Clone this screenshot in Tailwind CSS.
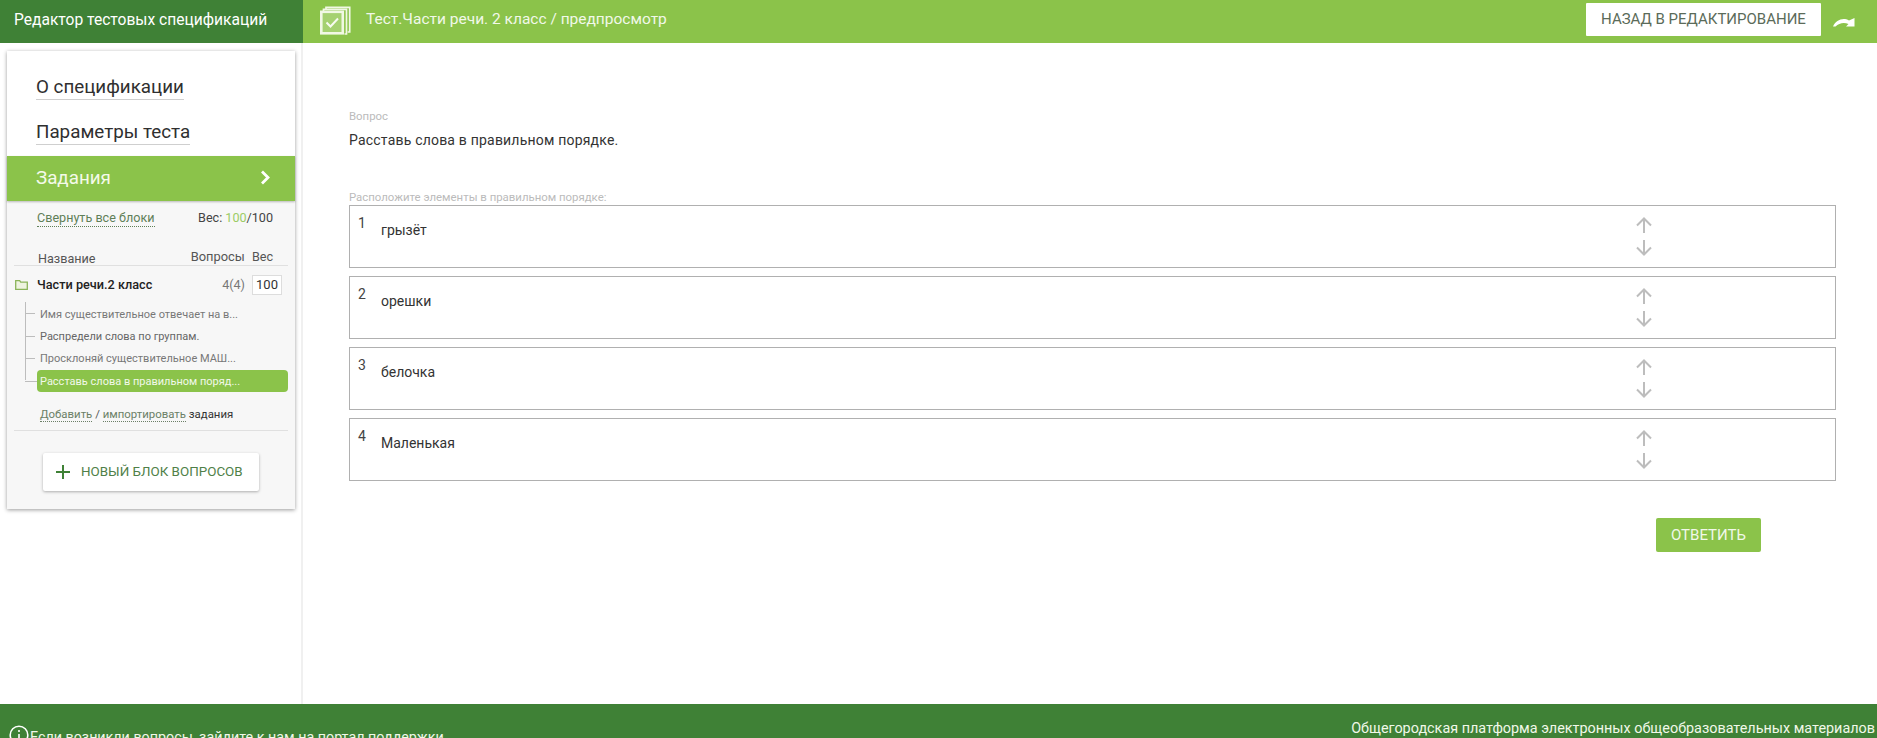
<!DOCTYPE html>
<html lang="ru">
<head>
<meta charset="UTF-8">
<title>Редактор тестовых спецификаций</title>
<script src="https://cdn.jsdelivr.net/npm/@tailwindcss/browser@4"></script>
</head>
<body class="bg-white font-['Roboto',sans-serif] text-[#333]">
<div class="flex flex-col h-[738px] overflow-hidden">
  <!-- header -->
  <header class="flex h-[43px] shrink-0 bg-[#8bc34a] text-white">
    <div class="w-[303px] bg-[#3f8136] pl-[14px] text-[15.600px] leading-[40px]">Редактор тестовых спецификаций</div>
    <div class="flex-1 flex items-center pl-[17px]">
      <svg width="31" height="31" viewBox="0 0 31 31" fill="none" stroke="#f1f8e4" class="mr-[15px] mt-[-1px]">
        <path d="M6 3V1.300h23.700V26h-2" stroke-width="1.700"/>
        <path d="M3.500 5V3.300h23V28h-2" stroke-width="1.700"/>
        <rect x="1.300" y="5.800" width="21.500" height="21.500" fill="#a5d170" stroke-width="2.600"/>
        <path d="M6.500 16.500l4 4 7.500-8" stroke="#f7fbf0" stroke-width="2"/>
      </svg>
      <div class="text-[15.500px] text-[#f1f8e9] mt-[-3px]">Тест.Части речи. 2 класс / предпросмотр</div>
      <button class="ml-auto h-[33px] w-[235px] bg-white text-[15px] text-[#5b6b59] rounded-[1px] mt-[-4px]">НАЗАД В РЕДАКТИРОВАНИЕ</button>
      <svg width="22" height="10" viewBox="0 0 22 10" class="ml-[12px] mr-[22px]">
        <path d="M0 9.500C3 3 10 0 16 3.500L21.500 1v8.500H13L15.500 7C11 5 6 6 2.500 9.500z" fill="#fff"/>
      </svg>
    </div>
  </header>

  <div class="flex flex-1 min-h-0">
    <!-- sidebar -->
    <aside class="w-[303px] shrink-0 border-r-2 border-[#f0f0f0] pt-[8px] pl-[7px]">
      <div class="w-[288px] bg-white shadow-[0_1px_4px_rgba(0,0,0,0.4)]">
        <div class="h-[105px] pt-[23px] pl-[29px] text-[18.800px] text-[#2f2f2f]">
          <div class="h-[26px] leading-[26px] w-fit border-b border-[#cfcfcf]">О спецификации</div>
          <div class="h-[26px] leading-[26px] w-fit border-b border-[#cfcfcf] mt-[19px]">Параметры теста</div>
        </div>
        <div class="h-[45px] bg-[#8bc34a] text-[#f4fae9] text-[18.800px] leading-[26px] pl-[29px] pr-[24px] pb-[2px] flex justify-between items-center shadow-[0_1px_2px_rgba(0,0,0,0.25)] relative">
          <span>Задания</span>
          <svg width="11" height="15" viewBox="0 0 11 15" fill="none" stroke="#fff" stroke-width="2.800"><path d="M2 1.500l6 6-6 6"/></svg>
        </div>
        <div class="bg-[#f7f7f7] h-[308px] pt-[8px] text-[12.600px]">
          <div class="flex justify-between pl-[30px] pr-[22px] leading-[18px]">
            <span class="text-[#5f7f58] border-b border-dotted border-[#5f7f58] leading-[15px] h-[17px] mt-[1px]">Свернуть все блоки</span>
            <span class="text-[#444]">Вес: <span class="text-[#9ccc65]">100</span>/100</span>
          </div>
          <div class="flex mx-[7px] pl-[24px] pr-[15px] mt-[23px] h-[16px] border-b border-[#e0e0e0] leading-[15px] text-[#555]">
            <span class="mt-[1px]">Название</span>
            <span class="ml-auto mt-[-1px] text-[12.900px]">Вопросы</span>
            <span class="ml-[7px] mt-[-1px]">Вес</span>
          </div>
          <div class="flex items-center mt-[9px] pl-[8px] pr-[13px] h-[20px]">
            <svg width="13" height="10" viewBox="0 0 13 10" fill="#eef3e0" stroke="#8bb45a" stroke-width="1.300"><path d="M.700 9.300V.700h4l1 1.500h6.600v7.100z"/></svg>
            <span class="ml-[9px] text-[#222] font-medium text-[12.700px]">Части речи.2 класс</span>
            <span class="ml-auto text-[#777]">4(4)</span>
            <span class="ml-[7px] w-[30px] h-[20px] border border-[#ddd] bg-white text-center leading-[18px] text-[#333] text-[13px]">100</span>
          </div>
          <div class="relative mt-[7px] text-[11px] pl-[33px]">
            <div class="absolute left-[18px] top-[0px] h-[78px] w-px bg-[#bdbdbd]"></div>
            <div class="h-[23px] leading-[25px] text-[#777] relative"><i class="absolute left-[-15px] top-[11px] w-[10px] h-px bg-[#bdbdbd]"></i>Имя существительное отвечает на в...</div>
            <div class="h-[22px] leading-[24px] text-[#666] relative"><i class="absolute left-[-15px] top-[11px] w-[10px] h-px bg-[#bdbdbd]"></i>Распредели слова по группам.</div>
            <div class="h-[23px] leading-[24px] text-[#777] relative"><i class="absolute left-[-15px] top-[11px] w-[10px] h-px bg-[#bdbdbd]"></i>Просклоняй существительное МАШ...</div>
            <div class="h-[22px] leading-[23px] text-[#f1f8e9] bg-[#8bc34a] rounded-[4px] ml-[-3px] pl-[3px] w-[251px] relative"><i class="absolute left-[-12px] top-[11px] w-[12px] h-px bg-[#bdbdbd]"></i>Расставь слова в правильном поряд...</div>
          </div>
          <div class="mx-[7px] mt-[14px] pl-[26px] h-[25px] border-b border-[#e0e0e0] text-[11.400px] leading-[16px] text-[#555]">
            <span class="text-[#6b7f66] border-b border-dotted border-[#6b7f66]">Добавить</span> / <span class="text-[#6b7f66] border-b border-dotted border-[#6b7f66]">импортировать</span> <span class="text-[#333]">задания</span>
          </div>
          <button class="flex items-center ml-[36px] mt-[22px] w-[216px] h-[38px] bg-white rounded-[2px] shadow-[0_1px_3px_rgba(0,0,0,0.3)] text-[#4f7f48] text-[13.400px] pl-[13px]">
            <svg width="14" height="14" viewBox="0 0 14 14" stroke="#3f8136" stroke-width="2" class="mr-[11px]"><path d="M7 0v14M0 7h14"/></svg>
            НОВЫЙ БЛОК ВОПРОСОВ
          </button>
        </div>
      </div>
    </aside>

    <!-- question -->
    <main class="flex-1 pl-[46px] pr-[41px] pt-[66px]">
      <div class="text-[11.400px] leading-[14px] text-[#bbb]">Вопрос</div>
      <div class="text-[14px] leading-[20px] mt-[7px] text-[#333] tracking-[0.2px]">Расставь слова в правильном порядке.</div>
      <div class="text-[11.400px] leading-[14px] text-[#bbb] mt-[40px]">Расположите элементы в правильном порядке:</div>
      <div class="flex flex-col gap-[8px] mt-[1px]">
        <div class="relative h-[63px] border border-[#b0b0b0] pl-[8px] flex">
          <span class="w-[23px] text-[14px] leading-[20px] mt-[7px] text-[#444]">1</span>
          <span class="text-[14px] leading-[20px] mt-[14px] text-[#333]">грызёт</span>
          <div class="ml-auto mr-[183px] mt-[11px] flex flex-col gap-[7px]">
            <svg width="16" height="16" viewBox="0 0 16 16" fill="none" stroke="#bdbdbd" stroke-width="2"><path d="M8 16V1.500M1 8.500l7-7 7 7"/></svg>
            <svg width="16" height="16" viewBox="0 0 16 16" fill="none" stroke="#bdbdbd" stroke-width="2"><path d="M8 0v14.500M1 7.500l7 7 7-7"/></svg>
          </div>
        </div>
        <div class="relative h-[63px] border border-[#b0b0b0] pl-[8px] flex">
          <span class="w-[23px] text-[14px] leading-[20px] mt-[7px] text-[#444]">2</span>
          <span class="text-[14px] leading-[20px] mt-[14px] text-[#333]">орешки</span>
          <div class="ml-auto mr-[183px] mt-[11px] flex flex-col gap-[7px]">
            <svg width="16" height="16" viewBox="0 0 16 16" fill="none" stroke="#bdbdbd" stroke-width="2"><path d="M8 16V1.500M1 8.500l7-7 7 7"/></svg>
            <svg width="16" height="16" viewBox="0 0 16 16" fill="none" stroke="#bdbdbd" stroke-width="2"><path d="M8 0v14.500M1 7.500l7 7 7-7"/></svg>
          </div>
        </div>
        <div class="relative h-[63px] border border-[#b0b0b0] pl-[8px] flex">
          <span class="w-[23px] text-[14px] leading-[20px] mt-[7px] text-[#444]">3</span>
          <span class="text-[14px] leading-[20px] mt-[14px] text-[#333]">белочка</span>
          <div class="ml-auto mr-[183px] mt-[11px] flex flex-col gap-[7px]">
            <svg width="16" height="16" viewBox="0 0 16 16" fill="none" stroke="#bdbdbd" stroke-width="2"><path d="M8 16V1.500M1 8.500l7-7 7 7"/></svg>
            <svg width="16" height="16" viewBox="0 0 16 16" fill="none" stroke="#bdbdbd" stroke-width="2"><path d="M8 0v14.500M1 7.500l7 7 7-7"/></svg>
          </div>
        </div>
        <div class="relative h-[63px] border border-[#b0b0b0] pl-[8px] flex">
          <span class="w-[23px] text-[14px] leading-[20px] mt-[7px] text-[#444]">4</span>
          <span class="text-[14px] leading-[20px] mt-[14px] text-[#333]">Маленькая</span>
          <div class="ml-auto mr-[183px] mt-[11px] flex flex-col gap-[7px]">
            <svg width="16" height="16" viewBox="0 0 16 16" fill="none" stroke="#bdbdbd" stroke-width="2"><path d="M8 16V1.500M1 8.500l7-7 7 7"/></svg>
            <svg width="16" height="16" viewBox="0 0 16 16" fill="none" stroke="#bdbdbd" stroke-width="2"><path d="M8 0v14.500M1 7.500l7 7 7-7"/></svg>
          </div>
        </div>
      </div>
      <div class="flex justify-end mt-[37px] pr-[75px]">
        <button class="w-[105px] h-[34px] bg-[#8bc34a] text-[#f1f8e9] text-[15px] rounded-[2px]">ОТВЕТИТЬ</button>
      </div>
    </main>
  </div>

  <!-- footer -->
  <footer class="flex justify-between h-[34px] shrink-0 bg-[#3f8136] text-[#f1f8e9] text-[14.300px] overflow-hidden">
    <div class="flex items-start pl-[9px] pt-[23px]">
      <svg width="20" height="20" viewBox="0 0 20 20" fill="none" stroke="#fff" stroke-width="1.600" class="shrink-0 mt-[-2px]">
        <circle cx="10" cy="10" r="8.800"/><path d="M10 9v6M10 5v2"/>
      </svg>
      <span class="leading-[20px] ml-[1px]">Если возникли вопросы, зайдите к нам на портал поддержки</span>
    </div>
    <div class="pt-[15px] pr-[2px] leading-[20px] text-[14.400px]">Общегородская платформа электронных общеобразовательных материалов</div>
  </footer>
</div>
</body>
</html>
